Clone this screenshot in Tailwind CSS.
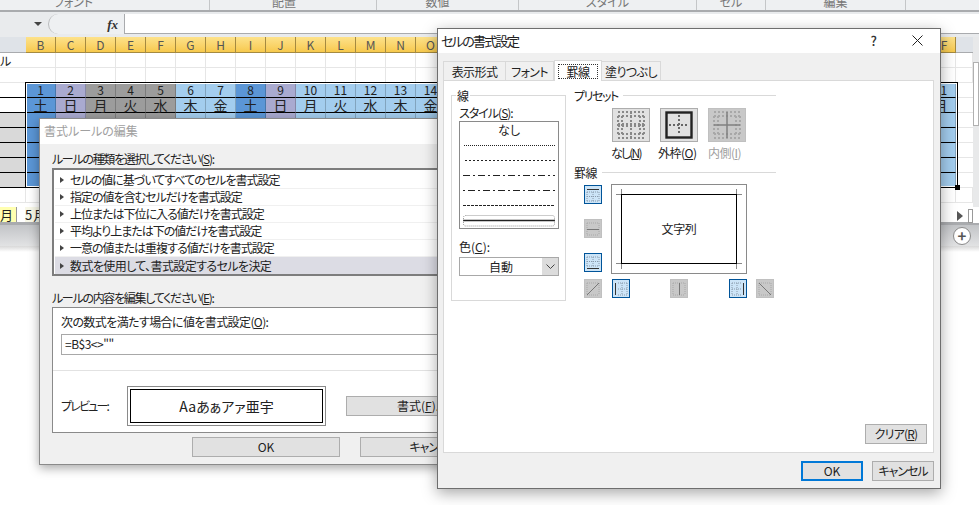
<!DOCTYPE html>
<html lang="ja">
<head>
    <meta charset="UTF-8" />
    <title>セルの書式設定</title>
    <script src="https://cdn.jsdelivr.net/npm/@tailwindcss/browser@4"></script>
</head>
<body class="bg-white">
<div class="relative w-[979px] h-[505px] overflow-hidden bg-white text-[12px] leading-none text-[#222] [font-family:'Noto_Sans_CJK_JP',sans-serif] [font-feature-settings:'palt']">

    <!-- ribbon -->
    <div class="flex h-[12px] overflow-hidden bg-[#eef0f2] border-b-2 border-[#a9abae] text-[#777]">
        <div class="w-[210px] border-r border-[#c4c6c8] text-center pr-[62px] -mt-[5px] leading-[14px]">フォント</div>
        <div class="w-[167px] border-r border-[#c4c6c8] text-center pr-[18px] -mt-[5px] leading-[14px]">配置</div>
        <div class="w-[142px] border-r border-[#c4c6c8] text-center pr-[20px] -mt-[5px] leading-[14px]">数値</div>
        <div class="w-[178px] border-r border-[#c4c6c8] text-center -mt-[5px] leading-[14px]">スタイル</div>
        <div class="w-[69px] border-r border-[#c4c6c8] text-center -mt-[5px] leading-[14px]">セル</div>
        <div class="w-[140px] border-r border-[#c4c6c8] text-center -mt-[5px] leading-[14px]">編集</div>
    </div>

    <!-- formula bar -->
    <div class="flex items-start h-[25px] pt-[2px] bg-[#e9ebed]">
        <div class="w-[34px]"></div>
        <div class="mt-[8px] w-0 h-0 border-x-[4px] border-x-transparent border-t-[4px] border-t-[#444]"></div>
        <div class="ml-[6px] w-[77px] h-[20px] flex items-center justify-end pr-[6px] bg-[#eef0f2] border-r border-[#a9abae] rounded-l-full border-l border-l-[#b8babc]">
            <span class="[font-family:'Liberation_Serif',serif] italic font-bold text-[13px] text-[#333]">fx</span>
        </div>
        <div class="flex-1 h-[20px] bg-white border-b border-[#a9abae]"></div>
    </div>

    <!-- sheet -->
    <div id="sheet" class="grid grid-cols-[26px_repeat(31,30px)_17px] grid-rows-[16px] auto-rows-[15px] w-[973px]"></div>

    <!-- sheet tabs -->
    <div class="flex h-[20px] items-end w-[973px] bg-white relative border-b border-[#a9abae]">
        <div class="w-[17px] h-[15px] bg-[#ffffb0] text-[13px] text-right pr-[3px] leading-[15px] border-r border-[#999]">月</div>
        <div class="ml-[8px] w-[30px] h-[15px] bg-[#f8f8e8] text-[13px] leading-[15px] tracking-[1px]">5月</div>
    </div>
    <div class="flex items-center justify-end h-[23px] bg-linear-to-b from-[#c2c4c7] to-[#e2e3e4] border-t-2 border-[#a9abae]">
        <div class="w-[18px] h-[18px] mr-[8px] rounded-full border border-[#8a8a8a] bg-white text-center font-bold text-[15px] leading-[15px] text-[#555]">+</div>
    </div>
    <div class="h-[6px] bg-linear-to-b from-[#d8d8d8] to-white"></div>

    <!-- sheet vertical scroll + tab scroll -->
    <div class="absolute left-[973px] top-[37px] w-[6px] h-[170px] bg-[#e8e9ea]">
        <div class="mt-[25px] h-[64px] bg-white border border-[#b0b0b0]"></div>
    </div>
    <div class="absolute left-[957px] top-[211px] w-0 h-0 border-y-[5px] border-y-transparent border-l-[6px] border-l-[#555]"></div>
    <div class="absolute left-[968px] top-[209px] w-[5px] h-[14px] bg-white border border-[#999]"></div>

    <!-- selection outline -->
    <div class="absolute left-[25px] top-[82px] w-[933px] h-[106px] border border-black">
        <div class="w-full h-full border border-white"></div>
        <div class="absolute -right-[3px] -bottom-[3px] w-[5px] h-[5px] bg-black"></div>
    </div>

    <!-- 書式ルールの編集 -->
    <div class="absolute left-[39px] top-[118px] w-[460px] h-[347px] bg-[#f0f0f0] border border-[#8a8a8a] shadow-[0_3px_10px_rgba(0,0,0,0.35)]">
        <div class="h-[25px] bg-white pl-[4px] text-[#a0a0a0] leading-[24px]">書式ルールの編集</div>
        <div class="px-[12px]">
            <div class="mt-[7px] h-[15px] leading-[15px] tracking-[-1.3px]">ルールの種類を選択してください(<u>S</u>):</div>
            <div class="mt-[2px] h-[108px] w-[440px] border-2 border-[#7d7d7d] bg-white pt-[2px] pl-[1px]">
                <div class="flex items-center h-[17px] border-b border-[#f0f0f0] pl-[5px] gap-[6px] tracking-[-1px]"><span class="w-0 h-0 border-y-[3px] border-y-transparent border-l-[4px] border-l-[#444]"></span>セルの値に基づいてすべてのセルを書式設定</div>
                <div class="flex items-center h-[17px] border-b border-[#f0f0f0] pl-[5px] gap-[6px] tracking-[-1px]"><span class="w-0 h-0 border-y-[3px] border-y-transparent border-l-[4px] border-l-[#444]"></span>指定の値を含むセルだけを書式設定</div>
                <div class="flex items-center h-[17px] border-b border-[#f0f0f0] pl-[5px] gap-[6px] tracking-[-1px]"><span class="w-0 h-0 border-y-[3px] border-y-transparent border-l-[4px] border-l-[#444]"></span>上位または下位に入る値だけを書式設定</div>
                <div class="flex items-center h-[17px] border-b border-[#f0f0f0] pl-[5px] gap-[6px] tracking-[-1px]"><span class="w-0 h-0 border-y-[3px] border-y-transparent border-l-[4px] border-l-[#444]"></span>平均より上または下の値だけを書式設定</div>
                <div class="flex items-center h-[17px] border-b border-[#f0f0f0] pl-[5px] gap-[6px] tracking-[-1px]"><span class="w-0 h-0 border-y-[3px] border-y-transparent border-l-[4px] border-l-[#444]"></span>一意の値または重複する値だけを書式設定</div>
                <div class="flex items-center h-[17px] bg-[#dcdce4] pl-[5px] gap-[6px] tracking-[-0.6px]"><span class="w-0 h-0 border-y-[3px] border-y-transparent border-l-[4px] border-l-[#444]"></span>数式を使用して、書式設定するセルを決定</div>
            </div>
            <div class="mt-[14px] h-[15px] leading-[15px] tracking-[-1.3px]">ルールの内容を編集してください(<u>E</u>):</div>
            <div class="mt-[2px] h-[126px] w-[440px] border border-[#8a8a8a] bg-white">
                <div class="mt-[6px] ml-[8px] h-[15px] leading-[15px] tracking-[-0.6px]">次の数式を満たす場合に値を書式設定(<u>O</u>):</div>
                <div class="mt-[5px] ml-[8px] h-[21px] border border-[#a8a8a8] pl-[3px] leading-[18px] tracking-[-0.5px]">=B$3&lt;&gt;""</div>
                <div class="mt-[15px] h-px bg-[#e2e2e2]"></div>
                <div class="flex items-center mt-[15px] ml-[8px]">
                    <div class="w-[66px] tracking-[-1.8px]">プレビュー:</div>
                    <div class="w-[199px] h-[40px] border border-[#8a8a8a] p-[2px]">
                        <div class="h-full border border-black flex items-center justify-center text-[14px]">Aaあぁアァ亜宇</div>
                    </div>
                    <div class="ml-[20px] w-[110px] h-[20px] pl-[50px] bg-[#e1e1e1] border border-[#adadad] leading-[18px]">書式(<u>F</u>)...</div>
                </div>
            </div>
            <div class="flex mt-[4px] ml-[140px] gap-[20px]">
                <div class="w-[148px] shrink-0 h-[20px] bg-[#e1e1e1] border border-[#adadad] text-center leading-[18px]">OK</div>
                <div class="w-[148px] shrink-0 h-[20px] bg-[#e1e1e1] border border-[#adadad] text-center leading-[18px] tracking-[-1px]">キャンセル</div>
            </div>
        </div>
    </div>

    <!-- セルの書式設定 -->
    <div class="absolute left-[437px] top-[28px] w-[504px] h-[461px] bg-[#f0f0f0] border border-[#6e6e6e] shadow-[0_4px_14px_rgba(0,0,0,0.35)]">
        <div class="flex items-center h-[24px] bg-white pl-[3px] pb-[2px]">
            <span class="text-[13px] tracking-[-1.7px]">セルの書式設定</span>
            <span class="ml-auto mr-[35px] text-[13px] font-medium text-[#333]">?</span>
            <svg class="mr-[17px]" width="11" height="11" viewBox="0 0 11 11"><path d="M0.5 0.5L10.5 10.5M10.5 0.5L0.5 10.5" stroke="#222" fill="none"/></svg>
        </div>

        <!-- tabs -->
        <div class="flex items-end h-[27px] pl-[5px] text-[12px] tracking-[-0.6px]">
            <div class="w-[63px] h-[19px] bg-[#f0f0f0] border border-b-0 border-[#d9d9d9] text-center leading-[19px]">表示形式</div>
            <div class="w-[48px] h-[19px] bg-[#f0f0f0] border border-b-0 border-l-0 border-[#d9d9d9] text-center leading-[19px]">フォント</div>
            <div class="relative z-10 w-[48px] h-[21px] -mb-px bg-white border border-b-0 border-[#d9d9d9] p-[3px]">
                <div class="h-[15px] border border-dotted border-[#333] text-center leading-[13px]">罫線</div>
            </div>
            <div class="w-[59px] h-[19px] bg-[#f0f0f0] border border-b-0 border-l-0 border-[#d9d9d9] text-center leading-[19px]">塗りつぶし</div>
        </div>

        <!-- panel -->
        <div class="relative flex ml-[5px] w-[491px] h-[373px] bg-white border border-[#d9d9d9]">
            <!-- 線 group -->
            <div class="relative ml-[7px] mt-[14px] w-[115px] h-[206px] border border-[#d9d9d9] px-[7px]">
                <span class="absolute -top-[6px] left-[4px] px-[1px] bg-white">線</span>
                <div class="mt-[10px] h-[14px] leading-[14px] tracking-[-1px]">スタイル(<u>S</u>):</div>
                <div class="mt-[1px] w-[100px] h-[108px] border border-[#8a8a8a] px-[3px]">
                    <div class="text-center h-[21px] leading-[15px]">なし</div>
                    <svg width="92" height="84" viewBox="0 0 92 84" class="block" fill="none" stroke="#222">
                        <path d="M1 2.5H92" stroke-dasharray="1 1"/>
                        <path d="M2 17.5H92" stroke-dasharray="2 2"/>
                        <path d="M0 32.5H92" stroke-dasharray="7 3 2 3"/>
                        <path d="M0 47.5H92" stroke-dasharray="2 3 7 3"/>
                        <path d="M0 62.5H92" stroke-dasharray="3 1"/>
                        <path d="M0 77.5H92" stroke-width="1.4"/>
                        <rect x="0.5" y="72.5" width="91" height="10.5" stroke="#555" stroke-dasharray="1 1" rx="2" stroke-width="0.6"/>
                    </svg>
                </div>
                <div class="mt-[11px] h-[14px] leading-[14px]">色(<u>C</u>):</div>
                <div class="flex mt-[3px] w-[100px] h-[19px] border border-[#a8a8a8] bg-white">
                    <div class="flex-1 text-center leading-[17px]">自動</div>
                    <div class="w-[16px] h-full bg-[#dcdcdc] flex items-center justify-center">
                        <svg width="9" height="5" viewBox="0 0 9 5"><path d="M0.5 0.5L4.5 4.5L8.5 0.5" stroke="#444" fill="none"/></svg>
                    </div>
                </div>
            </div>

            <!-- right side -->
            <div class="ml-[8px] mt-[8px] w-[202px]">
                <div class="flex items-center h-[13px] gap-[5px]"><span class="tracking-[-1.4px]">プリセット</span><div class="flex-1 h-px bg-[#d9d9d9]"></div></div>
                <div class="flex ml-[38px] mt-[6px] gap-[10px]">
                    <div class="w-[38px] h-[34px] bg-[#e1e1e1] border border-[#adadad] flex items-center justify-center">
                        <svg width="28" height="28" viewBox="0 0 28 28" fill="none" stroke="#888" stroke-width="2" stroke-dasharray="2 2"><path d="M1 1H27M1 5H27M1 13H27M1 15H27M1 23H27M1 27H27M1 5V23M5 5V23M14 1V27M23 5V23M27 5V23"/></svg>
                    </div>
                    <div class="w-[38px] h-[34px] bg-[#e1e1e1] border border-[#adadad] flex items-center justify-center">
                        <svg width="28" height="28" viewBox="0 0 28 28" fill="none"><path d="M14 4V24M4 14H24" stroke="#666" stroke-width="2" stroke-dasharray="2 2"/><rect x="1.5" y="1.5" width="25" height="25" stroke="#222" stroke-width="2.4"/></svg>
                    </div>
                    <div class="w-[38px] h-[34px] bg-[#c8c8c8] border border-[#c0c0c0] flex items-center justify-center">
                        <svg width="28" height="28" viewBox="0 0 28 28" fill="none"><path d="M1 1H27M1 5H27M1 23H27M1 27H27M1 5V23M5 5V23M23 5V23M27 5V23" stroke="#a8a8a8" stroke-width="2" stroke-dasharray="2 2"/><path d="M14 1V27M1 14H27" stroke="#808080" stroke-width="1.5"/></svg>
                    </div>
                </div>
                <div class="flex ml-[37px] mt-[4px] h-[14px] leading-[14px]">
                    <div class="w-[47px] tracking-[-1.8px]">なし(<u>N</u>)</div>
                    <div class="w-[50px] tracking-[-0.5px]">外枠(<u>O</u>)</div>
                    <div class="w-[40px] text-[#a0a0a0] tracking-[-0.5px]">内側(<u>I</u>)</div>
                </div>
                <div class="flex items-center h-[13px] gap-[5px] mt-[6px]"><span class="tracking-[-0.5px]">罫線</span><div class="flex-1 h-px bg-[#d9d9d9]"></div></div>

                <div class="flex mt-[5px]">
                    <div class="ml-[10px] w-[18px] flex flex-col gap-[15px] pt-[1px]">
                        <div class="w-[18px] h-[19px] bg-[#cce4f7] border border-[#005499] flex items-center justify-center">
                            <svg width="14" height="14" viewBox="0 0 14 14" fill="none"><path d="M1 4H13M1 13H13M1 4V13M13 4V13M7 4V13M1 8.5H13" stroke="#8899aa" stroke-dasharray="1 1"/><path d="M1 1.5H13" stroke="#333"/></svg>
                        </div>
                        <div class="w-[18px] h-[19px] bg-[#c8c8c8] border border-[#c0c0c0] flex items-center justify-center">
                            <svg width="14" height="14" viewBox="0 0 14 14" fill="none"><path d="M1 1H13M1 13H13M1 1V13M13 1V13" stroke="#a8a8a8" stroke-dasharray="1 1"/><path d="M1 7.5H13" stroke="#777"/></svg>
                        </div>
                        <div class="w-[18px] h-[19px] bg-[#cce4f7] border border-[#005499] flex items-center justify-center">
                            <svg width="14" height="14" viewBox="0 0 14 14" fill="none"><path d="M1 1H13M1 10H13M1 1V10M13 1V10M7 1V10M1 5.5H13" stroke="#8899aa" stroke-dasharray="1 1"/><path d="M1 12.5H13" stroke="#333"/></svg>
                        </div>
                    </div>
                    <div class="relative ml-[9px] w-[136px] h-[90px] border border-[#8a8a8a] p-[9px]">
                        <div class="w-full h-full border border-black flex items-center justify-center tracking-[-0.4px]">文字列</div>
                        <div class="absolute left-[9px] top-[4px] w-px h-[5px] bg-[#888]"></div>
                        <div class="absolute left-[4px] top-[9px] w-[5px] h-px bg-[#888]"></div>
                        <div class="absolute right-[9px] top-[4px] w-px h-[5px] bg-[#888]"></div>
                        <div class="absolute right-[4px] top-[9px] w-[5px] h-px bg-[#888]"></div>
                        <div class="absolute left-[9px] bottom-[4px] w-px h-[5px] bg-[#888]"></div>
                        <div class="absolute left-[4px] bottom-[9px] w-[5px] h-px bg-[#888]"></div>
                        <div class="absolute right-[9px] bottom-[4px] w-px h-[5px] bg-[#888]"></div>
                        <div class="absolute right-[4px] bottom-[9px] w-[5px] h-px bg-[#888]"></div>
                    </div>
                </div>
                <div class="flex mt-[5px] ml-[10px]">
                    <div class="w-[18px] h-[19px] bg-[#c8c8c8] border border-[#c0c0c0] flex items-center justify-center">
                        <svg width="14" height="14" viewBox="0 0 14 14" fill="none"><path d="M1 1H13M1 13H13M1 1V13M13 1V13" stroke="#a8a8a8" stroke-dasharray="1 1"/><path d="M1 13L13 1" stroke="#777"/></svg>
                    </div>
                    <div class="ml-[10px] w-[18px] h-[19px] bg-[#cce4f7] border border-[#005499] flex items-center justify-center">
                        <svg width="14" height="14" viewBox="0 0 14 14" fill="none"><path d="M4 1H13M4 13H13M13 1V13M8 1V13M4 7H13" stroke="#8899aa" stroke-dasharray="1 1"/><path d="M1.5 1V13" stroke="#333"/></svg>
                    </div>
                    <div class="ml-[40px] w-[18px] h-[19px] bg-[#c8c8c8] border border-[#c0c0c0] flex items-center justify-center">
                        <svg width="14" height="14" viewBox="0 0 14 14" fill="none"><path d="M1 1H13M1 13H13M1 1V13M13 1V13" stroke="#a8a8a8" stroke-dasharray="1 1"/><path d="M7.5 1V13" stroke="#777"/></svg>
                    </div>
                    <div class="ml-[41px] w-[18px] h-[19px] bg-[#cce4f7] border border-[#005499] flex items-center justify-center">
                        <svg width="14" height="14" viewBox="0 0 14 14" fill="none"><path d="M1 1H10M1 13H10M1 1V13M6 1V13M1 7H10" stroke="#8899aa" stroke-dasharray="1 1"/><path d="M12.5 1V13" stroke="#333"/></svg>
                    </div>
                    <div class="ml-[9px] w-[18px] h-[19px] bg-[#c8c8c8] border border-[#c0c0c0] flex items-center justify-center">
                        <svg width="14" height="14" viewBox="0 0 14 14" fill="none"><path d="M1 1H13M1 13H13M1 1V13M13 1V13" stroke="#a8a8a8" stroke-dasharray="1 1"/><path d="M1 1L13 13" stroke="#777"/></svg>
                    </div>
                </div>
            </div>
            <div class="absolute right-[6px] bottom-[8px] w-[62px] h-[20px] bg-[#e1e1e1] border border-[#adadad] text-center leading-[18px] tracking-[-0.8px]">クリア(<u>R</u>)</div>
        </div>

        <div class="flex justify-end gap-[9px] mt-[8px] mr-[6px]">
            <div class="w-[62px] h-[20px] bg-[#e1e1e1] border-2 border-[#0078d7] text-center leading-[16px]">OK</div>
            <div class="w-[62px] h-[20px] bg-[#e1e1e1] border border-[#adadad] text-center leading-[18px] tracking-[-1px]">キャンセル</div>
        </div>
    </div>
</div>

<script>
    const letras = ['B','C','D','E','F','G','H','I','J','K','L','M','N','O','P','Q','R','S','T','U','V','W','X','Y','Z','AA','AB','AC','AD','AE','AF'];
    const semana = ['土','日','月','火','水','木','金'];
    const sheet = document.getElementById('sheet');
    let html = '';

    function colorDia(i) {
        if (i >= 2 && i <= 4) return 'bg-[#9c9c9c]';
        if (i % 7 === 0) return 'bg-[#5b96d6]';
        if (i % 7 === 1) return 'bg-[#a9aad0]';
        return 'bg-[#a3cdee]';
    }

    html += '<div class="bg-[#dfe3e8] border-b border-[#a9abae]"></div>';
    letras.forEach(l => {
        html += `<div class="bg-linear-to-b from-[#fde28a] to-[#f7c94c] border-r border-b border-[#a58a40] text-center text-[12px] leading-[15px] text-[#555]">${l}</div>`;
    });
    html += '<div class="bg-[#dfe3e8] border-b border-[#a9abae]"></div>';

    // filas vacias de arriba
    for (let f = 0; f < 2; f++) {
        html += `<div class="border-b border-[#e6e6e6] text-[12px] leading-[15px]">${f === 0 ? 'ル' : ''}</div>`;
        for (let c = 0; c < 32; c++) html += '<div class="border-r border-b border-[#e6e6e6]"></div>';
    }

    // tabla
    for (let f = 0; f < 7; f++) {
        html += `<div class="border-b border-black ${f < 2 ? 'bg-white' : 'bg-[#d9d9d9]'}"></div>`;
        for (let c = 0; c < 31; c++) {
            const txt = f === 0 ? c + 1 : f === 1 ? semana[c % 7] : '';
            html += `<div class="${colorDia(c)} border-r border-r-black/20 border-b border-b-black text-center ${f === 1 ? 'text-[14px] leading-[15px]' : 'text-[12px] leading-[14px]'}">${txt}</div>`;
        }
        html += '<div class="border-b border-[#e6e6e6]"></div>';
    }

    // filas vacias de abajo
    for (let c = 0; c < 33; c++) html += '<div class="border-r border-b border-[#e6e6e6]"></div>';
    sheet.innerHTML = html;
</script>
</body>
</html>
